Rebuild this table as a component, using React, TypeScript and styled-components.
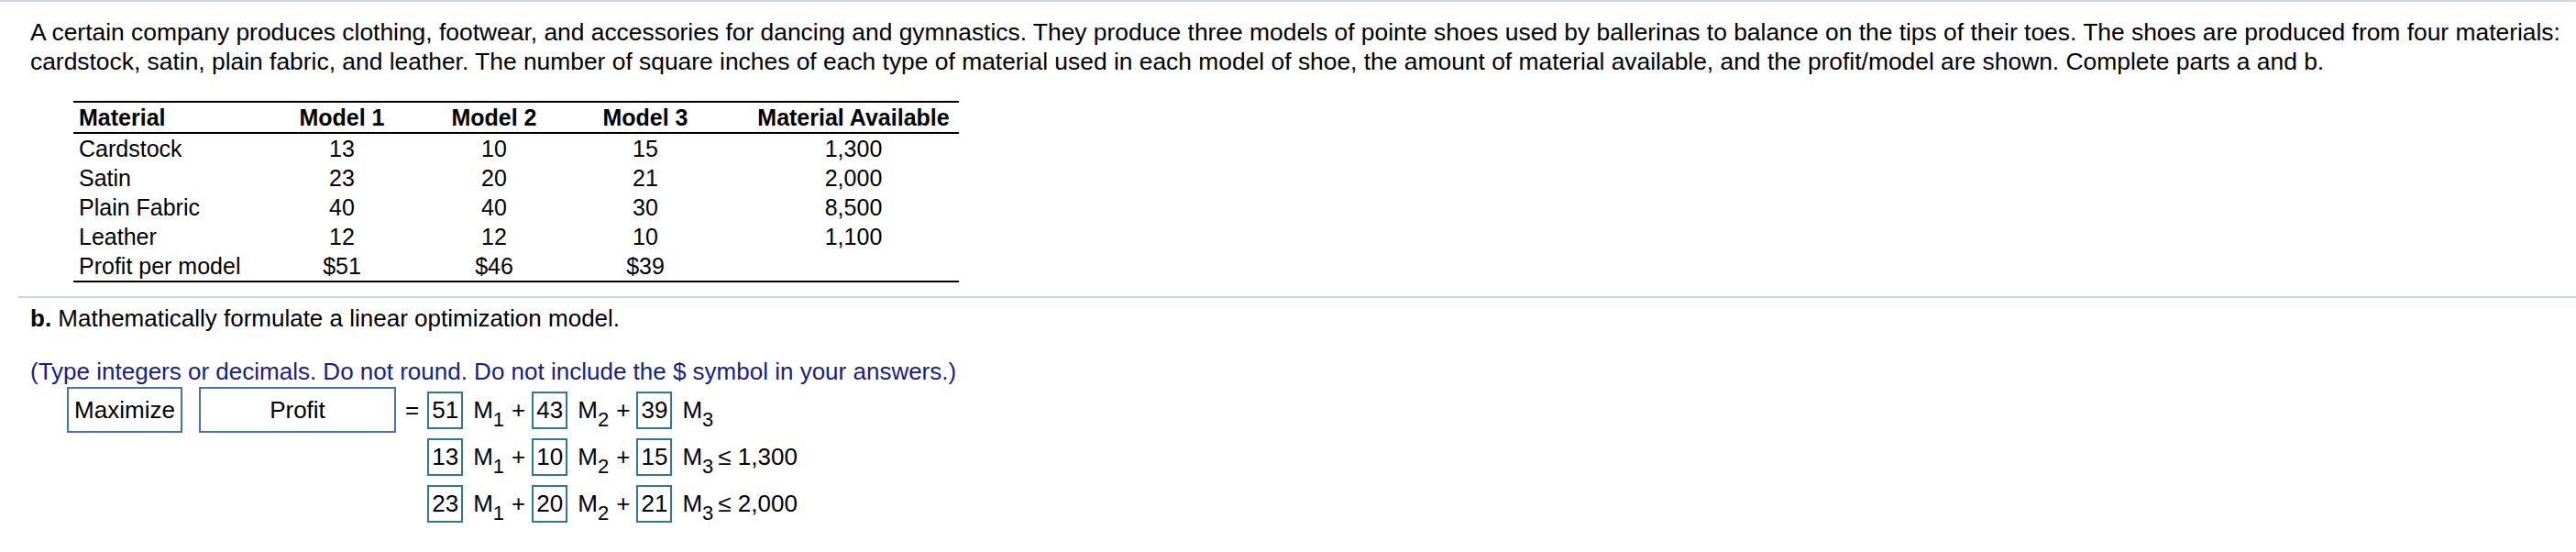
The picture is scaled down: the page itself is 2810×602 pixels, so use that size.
import React from 'react';
import styled, { createGlobalStyle } from 'styled-components';

const GlobalStyle = createGlobalStyle`
  body {
    margin: 0;
    background: #fff;
    color: #000;
    font-family: "Liberation Sans", Arial, sans-serif;
    font-size: 26px;
  }
`;

const Page = styled.div`
  width: 2810px;
  height: 602px;
  overflow: hidden;
  border-top: 2px solid #d0d4e0;
  box-sizing: border-box;
`;

const Intro = styled.p`
  margin: 17px 8px 0 33px;
  font-size: 26.4px;
  line-height: 32px;
`;

const DataTable = styled.table`
  margin: 27px 0 0 80px;
  width: 966px;
  border-collapse: collapse;
  border-top: 2px solid #000;
  border-bottom: 2px solid #000;
  line-height: 32px;

  th, td {
    padding: 0;
    text-align: center;
    font-size: 25px;
  }
  th {
    font-weight: bold;
    border-bottom: 2px solid #000;
  }
  th:first-child, td:first-child {
    text-align: left;
    padding-left: 6px;
    width: 204px;
  }
  th:nth-child(2), td:nth-child(2) { width: 166px; }
  th:nth-child(3), td:nth-child(3) { width: 166px; }
  th:nth-child(4), td:nth-child(4) { width: 164px; }
  th:last-child, td:last-child { padding-left: 30px; }
`;

const PartB = styled.section`
  margin: 15px 0 0 20px;
  border-top: 2px solid #d0d4e0;
  padding: 6px 0 0 13px;
`;

const Heading = styled.div`
  line-height: 32px;
`;

const Note = styled.div`
  margin-top: 26px;
  line-height: 32px;
  color: #16208c;
`;

const Formulation = styled.div`
  margin: 1px 0 0 40px;
  display: flex;
  align-items: flex-start;
`;

const ChoiceBox = styled.div<{ $w: number }>`
  width: ${p => p.$w}px;
  height: 50px;
  box-sizing: border-box;
  border: 2px solid #4670c6;
  display: flex;
  align-items: center;
  justify-content: center;
  margin-right: 18px;
`;

const Equals = styled.div`
  line-height: 50px;
  margin: 0 9px 0 -8px;
`;

const Rows = styled.div`
  display: flex;
  flex-direction: column;
  gap: 10px;
  margin-top: 5px;
`;

const EqRow = styled.div`
  display: flex;
  align-items: center;
  height: 41px;
`;

const Coef = styled.div`
  width: 39px;
  height: 41px;
  box-sizing: border-box;
  border: 2px solid #2f7896;
  display: flex;
  align-items: center;
  justify-content: center;
`;

const Var = styled.span`
  margin-left: 11px;
  white-space: nowrap;
`;

const Sub = styled.span`
  font-size: 22px;
  vertical-align: -9px;
  line-height: 0;
`;

const Plus = styled.span`
  margin: 0 7px 0 8px;
`;

const Rhs = styled.span`
  margin-left: 5px;
`;

const materials = [
  ['Cardstock', '13', '10', '15', '1,300'],
  ['Satin', '23', '20', '21', '2,000'],
  ['Plain Fabric', '40', '40', '30', '8,500'],
  ['Leather', '12', '12', '10', '1,100'],
  ['Profit per model', '$51', '$46', '$39', ''],
];

const equations = [
  { c: ['51', '43', '39'], rhs: '' },
  { c: ['13', '10', '15'], rhs: '≤ 1,300' },
  { c: ['23', '20', '21'], rhs: '≤ 2,000' },
];

const Equation = ({ c, rhs }: { c: string[]; rhs: string }) => (
  <EqRow>
    {c.map((v, i) => (
      <React.Fragment key={i}>
        <Coef>{v}</Coef>
        <Var>M<Sub>{i + 1}</Sub></Var>
        {i < c.length - 1 && <Plus>+</Plus>}
      </React.Fragment>
    ))}
    {rhs && <Rhs>{rhs}</Rhs>}
  </EqRow>
);

const App = () => {
  return <Page>
    <GlobalStyle />
    <Intro>
      A certain company produces clothing, footwear, and accessories for dancing and gymnastics. They produce three models of pointe shoes used by ballerinas to balance on the tips of their toes. The shoes are produced from four materials: cardstock, satin, plain fabric, and leather. The number of square inches of each type of material used in each model of shoe, the amount of material available, and the profit/model are shown. Complete parts a and b.
    </Intro>

    <DataTable>
      <thead>
        <tr>
          <th>Material</th>
          <th>Model 1</th>
          <th>Model 2</th>
          <th>Model 3</th>
          <th>Material Available</th>
        </tr>
      </thead>
      <tbody>
        {materials.map(row => (
          <tr key={row[0]}>
            {row.map((cell, i) => <td key={i}>{cell}</td>)}
          </tr>
        ))}
      </tbody>
    </DataTable>

    <PartB>
      <Heading><b>b.</b> Mathematically formulate a linear optimization model.</Heading>
      <Note>(Type integers or decimals. Do not round. Do not include the $ symbol in your answers.)</Note>
      <Formulation>
        <ChoiceBox $w={126}>Maximize</ChoiceBox>
        <ChoiceBox $w={215}>Profit</ChoiceBox>
        <Equals>=</Equals>
        <Rows>
          {equations.map((eq, i) => <Equation key={i} c={eq.c} rhs={eq.rhs} />)}
        </Rows>
      </Formulation>
    </PartB>
  </Page>
}

export default App;
